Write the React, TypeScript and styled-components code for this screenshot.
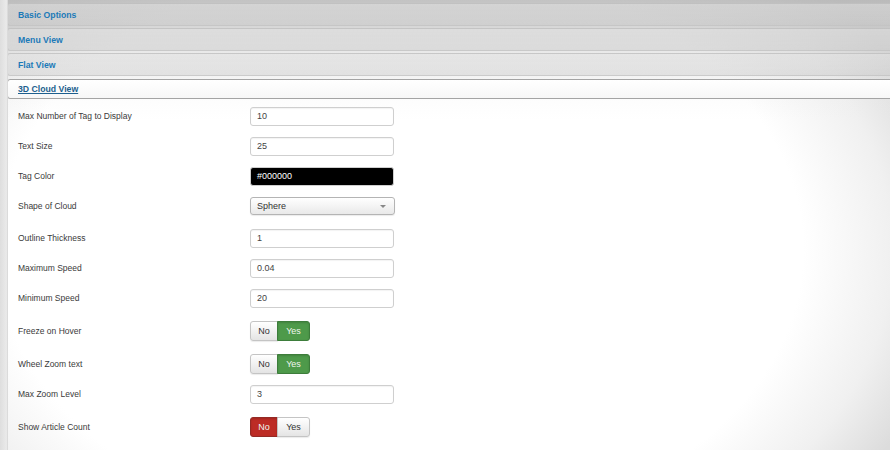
import styled, { createGlobalStyle } from "styled-components";

const GlobalStyle = createGlobalStyle`
  html, body {
    margin: 0;
    padding: 0;
  }
  body {
    font-family: "Liberation Sans", Arial, sans-serif;
    font-size: 9px;
    color: #333;
  }
`;

const Page = styled.div`
  width: 890px;
  height: 450px;
  overflow: hidden;
  position: relative;
  background:
    linear-gradient(to bottom, rgba(175, 175, 175, 0.75) 0px, rgba(205, 205, 205, 0.45) 50px, rgba(235, 235, 235, 0.15) 95px, rgba(255, 255, 255, 0) 120px),
    radial-gradient(ellipse 560px 400px at 400px 250px, #ffffff 72%, #f0f0f0 88%, #dcdcdc 100%);
  display: flex;
  box-sizing: border-box;
  padding-left: 7px;
`;

const LeftStrip = styled.div`
  position: absolute;
  left: 0;
  top: 0;
  bottom: 0;
  width: 8px;
  background: linear-gradient(to right, #dedede, #eaeaea 80%, #d4d4d4);
`;

const Accordion = styled.div`
  flex: 1;
  display: flex;
  flex-direction: column;
  padding-top: 3px;
  gap: 2px;
`;

const Header = styled.div<{ $open?: boolean }>`
  flex-shrink: 0;
  height: ${(p) => (p.$open ? "18px" : "21px")};
  margin-right: -20px;
  display: flex;
  align-items: center;
  padding-left: 10px;
  border: 1px solid ${(p) => (p.$open ? "#a4a4a4" : "rgba(190, 190, 190, 0.7)")};
  border-radius: 3px 0 0 3px;
  background: ${(p) =>
    p.$open
      ? "linear-gradient(to bottom, #ffffff, #f7f7f7)"
      : "linear-gradient(to bottom, rgba(225,225,225,0.5), rgba(200,200,200,0.4))"};
  margin-top: ${(p) => (p.$open ? "1px" : "0")};
`;

const HeaderLink = styled.span<{ $open?: boolean }>`
  font-weight: bold;
  font-size: 8.7px;
  color: ${(p) => (p.$open ? "#1d5f8e" : "#1b7ab8")};
  text-decoration: ${(p) => (p.$open ? "underline" : "none")};
`;

const Panel = styled.div`
  flex-shrink: 0;
  margin-top: 0;
  padding-left: 11px;
  display: flex;
  flex-direction: column;
`;

const Row = styled.div<{ $shift?: number }>`
  height: 30px;
  margin-top: ${(p) => p.$shift ?? 0}px;
  display: grid;
  grid-template-columns: 232px 1fr;
  align-items: center;
`;

const Label = styled.label`
  font-size: 8.5px;
  color: #3a3a3a;
`;

const TextInput = styled.div<{ $dark?: boolean }>`
  width: 144px;
  height: 19px;
  box-sizing: border-box;
  border: 1px solid #cfcfcf;
  border-radius: 3px;
  padding: 0 6px;
  display: flex;
  align-items: center;
  font-size: 9px;
  color: ${(p) => (p.$dark ? "#fff" : "#444")};
  background: ${(p) => (p.$dark ? "#000" : "#fff")};
  box-shadow: inset 0 1px 1px rgba(0, 0, 0, 0.05);
`;

const Select = styled.div`
  width: 145px;
  height: 18px;
  box-sizing: border-box;
  border: 1px solid #b4b4b4;
  border-radius: 3px;
  padding: 0 6px;
  display: flex;
  align-items: center;
  justify-content: space-between;
  font-size: 9px;
  color: #333;
  background: linear-gradient(to bottom, #ffffff, #e9e9e9);
  box-shadow: 0 1px 1px rgba(0, 0, 0, 0.08);
`;

const Caret = styled.span`
  width: 0;
  height: 0;
  border-left: 3px solid transparent;
  border-right: 3px solid transparent;
  border-top: 3px solid #888;
  margin-right: 2px;
`;

const Toggle = styled.div`
  display: flex;
  height: 20px;
  width: 60px;
`;

const ToggleButton = styled.div<{ $tone?: "green" | "red"; $first?: boolean }>`
  box-sizing: border-box;
  height: 20px;
  display: flex;
  align-items: center;
  justify-content: center;
  font-size: 9px;
  border: 1px solid ${(p) => (p.$tone === "green" ? "#3d7d3b" : p.$tone === "red" ? "#942a25" : "#c4c4c4")};
  border-radius: ${(p) => (p.$first ? "3px 0 0 3px" : "0 3px 3px 0")};
  margin-left: ${(p) => (p.$first ? "0" : "-1px")};
  flex: ${(p) => (p.$first ? "0 0 28px" : "1")};
  color: ${(p) => (p.$tone ? "#eef6ee" : "#333")};
  background: ${(p) =>
    p.$tone === "green"
      ? "#4e9a4a"
      : p.$tone === "red"
      ? "#bd2c25"
      : "linear-gradient(to bottom, #ffffff, #e4e4e4)"};
  box-shadow: ${(p) => (p.$tone ? "inset 0 1px 2px rgba(0,0,0,0.15)" : "0 1px 1px rgba(0,0,0,0.08)")};
`;

type Field =
  | { label: string; kind: "text"; value: string; dark?: boolean; shift?: number }
  | { label: string; kind: "select"; value: string; shift?: number }
  | { label: string; kind: "toggle"; yes: boolean; shift?: number };

const fields: Field[] = [
  { label: "Max Number of Tag to Display", kind: "text", value: "10" },
  { label: "Text Size", kind: "text", value: "25" },
  { label: "Tag Color", kind: "text", value: "#000000", dark: true },
  { label: "Shape of Cloud", kind: "select", value: "Sphere" },
  { label: "Outline Thickness", kind: "text", value: "1", shift: 2 },
  { label: "Maximum Speed", kind: "text", value: "0.04" },
  { label: "Minimum Speed", kind: "text", value: "20" },
  { label: "Freeze on Hover", kind: "toggle", yes: true, shift: 3 },
  { label: "Wheel Zoom text", kind: "toggle", yes: true, shift: 3 },
  { label: "Max Zoom Level", kind: "text", value: "3" },
  { label: "Show Article Count", kind: "toggle", yes: false, shift: 3 },
];

const sections = ["Basic Options", "Menu View", "Flat View"];

export default function App() {
  return (
    <>
      <GlobalStyle />
      <Page>
        <LeftStrip />
        <Accordion>
          {sections.map((s) => (
            <Header key={s}>
              <HeaderLink>{s}</HeaderLink>
            </Header>
          ))}
          <Header $open>
            <HeaderLink $open>3D Cloud View</HeaderLink>
          </Header>
          <Panel>
            {fields.map((f) => (
              <Row key={f.label} $shift={f.shift}>
                <Label>{f.label}</Label>
                {f.kind === "text" && <TextInput $dark={f.dark}>{f.value}</TextInput>}
                {f.kind === "select" && (
                  <Select>
                    {f.value}
                    <Caret />
                  </Select>
                )}
                {f.kind === "toggle" && (
                  <Toggle>
                    <ToggleButton $first $tone={f.yes ? undefined : "red"}>No</ToggleButton>
                    <ToggleButton $tone={f.yes ? "green" : undefined}>Yes</ToggleButton>
                  </Toggle>
                )}
              </Row>
            ))}
          </Panel>
        </Accordion>
      </Page>
    </>
  );
}
